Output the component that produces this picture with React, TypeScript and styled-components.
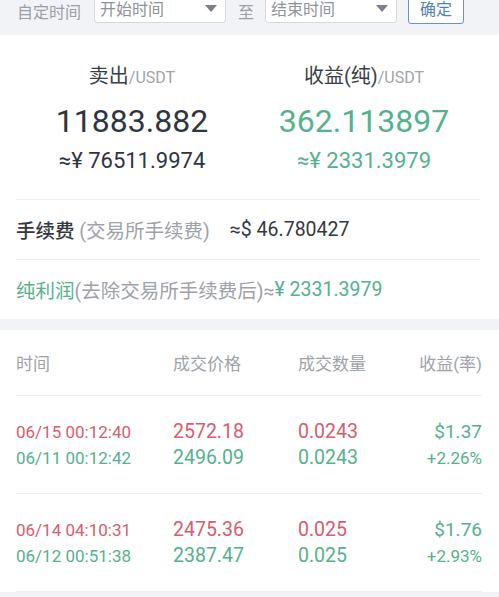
import React, { FC } from 'react';
import styled, { createGlobalStyle } from 'styled-components';

const GlobalStyle = createGlobalStyle`
  html, body {
    margin: 0;
    padding: 0;
    background: #f2f3f6;
    font-family: Roboto, "Noto Sans CJK SC", sans-serif;
    overflow: hidden;
  }
`;

const GREEN = '#55b18c';
const RED = '#d65d6d';

const Page = styled.div`
  width: 499px;
  height: 597px;
  overflow: hidden;
  background: #f2f3f6;
`;

const Toolbar = styled.div`
  display: flex;
  align-items: center;
  height: 22px;
  padding: 0 16px 13px 17px;
  font-size: 16px;
  color: #9a9ea6;
`;

const Label = styled.span`
  margin-right: 13px;
`;

const Select = styled.div`
  display: flex;
  align-items: center;
  justify-content: space-between;
  box-sizing: border-box;
  width: 132px;
  height: 30px;
  padding: 0 8px 0 5px;
  background: #fff;
  border: 1px solid #d6d8dc;
  border-radius: 3px;
  color: #8e929a;
  margin-top: -6px;
`;

const Caret = styled.span`
  width: 0;
  height: 0;
  border-left: 6px solid transparent;
  border-right: 6px solid transparent;
  border-top: 7px solid #7c8088;
`;

const To = styled.span`
  margin: 0 11px 0 12px;
`;

const ConfirmButton = styled.button`
  box-sizing: border-box;
  height: 32px;
  width: 56px;
  margin-left: 11px;
  margin-top: -7px;
  background: #fff;
  border: 1px solid #6a93c6;
  border-radius: 3px;
  color: #4f7fbc;
  font-family: inherit;
  font-size: 16px;
`;

const Card = styled.section`
  background: #fff;
  padding: 0 19px 0 16px;
`;

const Summary = styled.div`
  display: grid;
  grid-template-columns: 1fr 1fr;
  padding: 29px 0 24px;
  border-bottom: 1px solid #eceef1;
`;

const SummaryItem = styled.div`
  display: flex;
  flex-direction: column;
  align-items: center;
`;

const SummaryLabel = styled.div`
  font-size: 20px;
  line-height: 24px;
  color: #3a3f47;
  & small {
    font-size: 16px;
    color: #a0a4ab;
  }
`;

const BigNumber = styled.div<{ $green?: boolean }>`
  margin-top: 11px;
  font-size: 32px;
  line-height: 40px;
  color: ${(p) => (p.$green ? GREEN : '#2e3540')};
`;

const SubNumber = styled.div<{ $green?: boolean }>`
  margin-top: 6px;
  font-size: 22px;
  line-height: 28px;
  color: ${(p) => (p.$green ? GREEN : '#2e3540')};
`;

const InfoRow = styled.div<{ $last?: boolean }>`
  display: flex;
  align-items: center;
  height: 59px;
  font-size: 19.5px;
  color: #9ea2a9;
  border-bottom: ${(p) => (p.$last ? 'none' : '1px solid #eceef1')};
`;

const Strong = styled.span`
  color: #333840;
  font-weight: 500;
`;

const Dark = styled.span`
  color: #333840;
  margin-left: 20px;
`;

const Green = styled.span`
  color: ${GREEN};
`;

const TableCard = styled.section`
  background: #fff;
  margin-top: 11px;
  padding: 0 17px 0 16px;
`;

const Row = styled.div<{ $head?: boolean }>`
  display: grid;
  grid-template-columns: 157px 125px 1fr 1fr;
  align-items: center;
  height: ${(p) => (p.$head ? '65px' : '97px')};
  border-bottom: 1px solid #eceef1;
  color: #9ea2a9;
  font-size: 17px;
  & > *:last-child {
    text-align: right;
  }
`;

const Cell = styled.div<{ $size?: number }>`
  display: flex;
  flex-direction: column;
  font-size: ${(p) => p.$size ?? 18}px;
  line-height: 26px;
`;

const Line = styled.span<{ $color: string; $size?: number }>`
  color: ${(p) => p.$color};
  ${(p) => (p.$size ? `font-size: ${p.$size}px;` : '')}
`;

interface Trade {
  sellTime: string;
  buyTime: string;
  sellPrice: string;
  buyPrice: string;
  amount: string;
  profit: string;
  rate: string;
}

const trades: Trade[] = [
  {
    sellTime: '06/15 00:12:40',
    buyTime: '06/11 00:12:42',
    sellPrice: '2572.18',
    buyPrice: '2496.09',
    amount: '0.0243',
    profit: '$1.37',
    rate: '+2.26%',
  },
  {
    sellTime: '06/14 04:10:31',
    buyTime: '06/12 00:51:38',
    sellPrice: '2475.36',
    buyPrice: '2387.47',
    amount: '0.025',
    profit: '$1.76',
    rate: '+2.93%',
  },
];

const TradeRow: FC<{ trade: Trade }> = ({ trade }) => (
  <Row>
    {/* Time */}
    <Cell $size={17}>
      <Line $color={RED}>{trade.sellTime}</Line>
      <Line $color={GREEN}>{trade.buyTime}</Line>
    </Cell>

    {/* Price */}
    <Cell $size={19.5}>
      <Line $color={RED}>{trade.sellPrice}</Line>
      <Line $color={GREEN}>{trade.buyPrice}</Line>
    </Cell>

    {/* Amount */}
    <Cell $size={19.5}>
      <Line $color={RED}>{trade.amount}</Line>
      <Line $color={GREEN}>{trade.amount}</Line>
    </Cell>

    {/* Profit */}
    <Cell $size={19}>
      <Line $color={GREEN}>{trade.profit}</Line>
      <Line $color={GREEN} $size={17}>
        {trade.rate}
      </Line>
    </Cell>
  </Row>
);

const App: FC = () => {
  return (
    <Page>
      <GlobalStyle />

      {/* Date filter */}
      <Toolbar>
        <Label>自定时间</Label>
        <Select>
          <span>开始时间</span>
          <Caret />
        </Select>
        <To>至</To>
        <Select>
          <span>结束时间</span>
          <Caret />
        </Select>
        <ConfirmButton>确定</ConfirmButton>
      </Toolbar>

      {/* Summary */}
      <Card>
        <Summary>
          <SummaryItem>
            <SummaryLabel>
              卖出<small>/USDT</small>
            </SummaryLabel>
            <BigNumber>11883.882</BigNumber>
            <SubNumber>≈¥ 76511.9974</SubNumber>
          </SummaryItem>
          <SummaryItem>
            <SummaryLabel>
              收益(纯)<small>/USDT</small>
            </SummaryLabel>
            <BigNumber $green>362.113897</BigNumber>
            <SubNumber $green>≈¥ 2331.3979</SubNumber>
          </SummaryItem>
        </Summary>

        <InfoRow>
          <Strong>手续费</Strong>&nbsp;(交易所手续费)
          <Dark>≈$ 46.780427</Dark>
        </InfoRow>

        <InfoRow $last>
          <Green>纯利润</Green>(去除交易所手续费后)≈<Green>¥ 2331.3979</Green>
        </InfoRow>
      </Card>

      {/* Trades */}
      <TableCard>
        <Row $head>
          <span>时间</span>
          <span>成交价格</span>
          <span>成交数量</span>
          <span>收益(率)</span>
        </Row>
        {trades.map((t) => (
          <TradeRow key={t.sellTime} trade={t} />
        ))}
      </TableCard>
    </Page>
  );
};

export default App;
